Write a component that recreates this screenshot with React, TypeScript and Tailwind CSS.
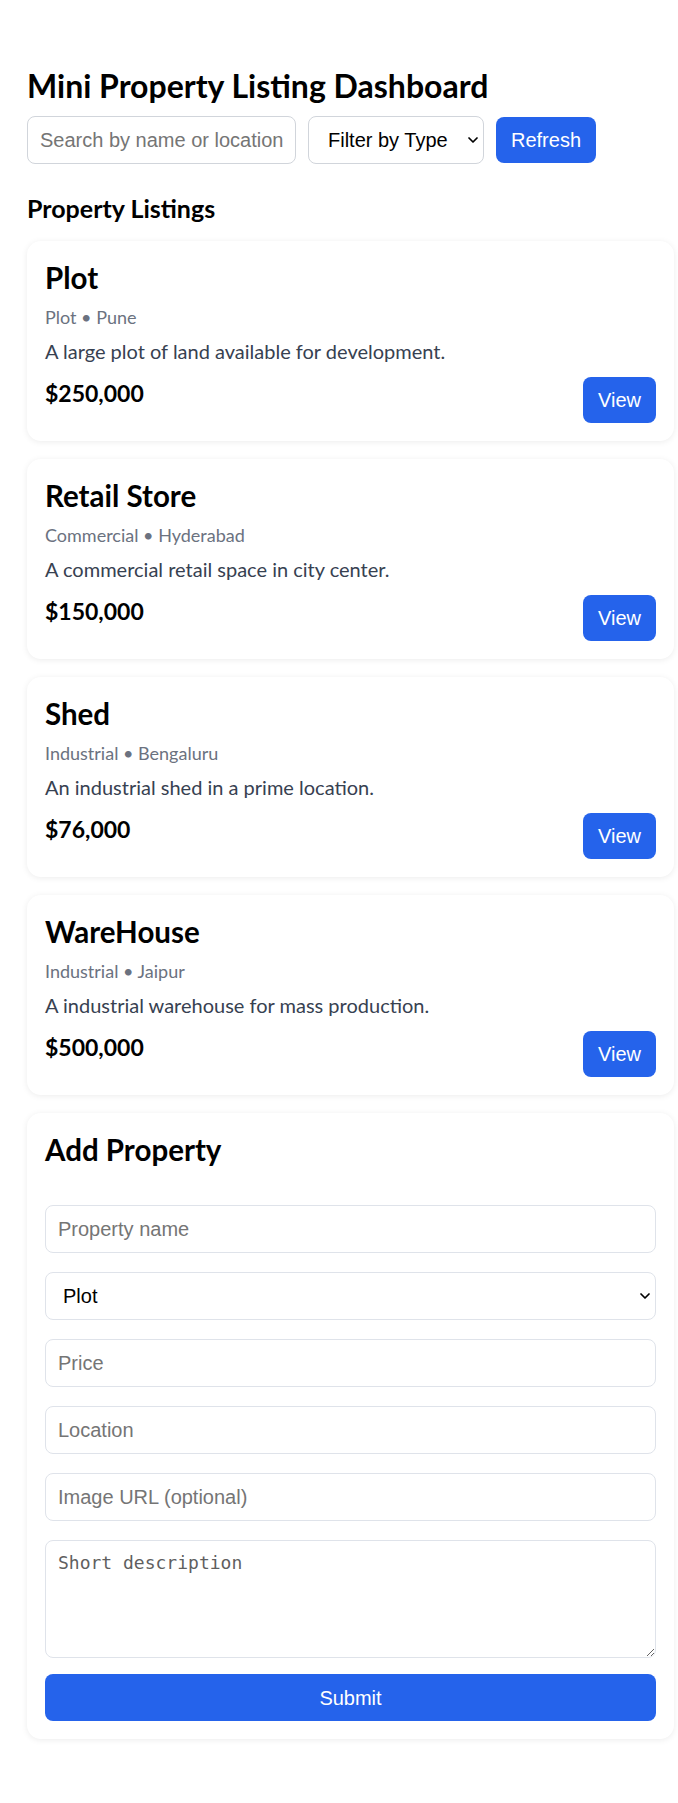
import React from 'react';
import { ChevronDown } from 'lucide-react';

const listings = [
  { title: 'Plot', type: 'Plot', city: 'Pune', desc: 'A large plot of land available for development.', price: '$250,000' },
  { title: 'Retail Store', type: 'Commercial', city: 'Hyderabad', desc: 'A commercial retail space in city center.', price: '$150,000' },
  { title: 'Shed', type: 'Industrial', city: 'Bengaluru', desc: 'An industrial shed in a prime location.', price: '$76,000' },
  { title: 'WareHouse', type: 'Industrial', city: 'Jaipur', desc: 'A industrial warehouse for mass production.', price: '$500,000' },
];

const field =
  "w-full h-[48px] px-[12px] rounded-lg border border-[#dfe3ea] bg-white text-[20px] text-black font-['Liberation_Sans',Arial,sans-serif] placeholder:text-[#757575] outline-none";

const App: React.FC = () => {
  return (
    <div className="min-h-[1803px] bg-white pl-[27px] pr-[4px] pt-[68px] font-['Lato',sans-serif] text-black">
      {/* Header */}
      <h1 className="text-[32px] leading-[36px] font-bold">Mini Property Listing Dashboard</h1>

      <div className="mt-[12px] flex items-center gap-[12px]">
        <input
          placeholder="Search by name or location"
          className="w-[269px] h-[48px] px-[12px] rounded-lg border border-[#d1d5db] text-[20px] font-['Liberation_Sans',Arial,sans-serif] placeholder:text-[#757575] outline-none"
        />
        <div className="relative">
          <select className="appearance-none w-[176px] h-[48px] pl-[19px] pr-[30px] rounded-lg border border-[#d1d5db] bg-white text-[20px] text-black font-['Liberation_Sans',Arial,sans-serif]">
            <option>Filter by Type</option>
            <option>Plot</option>
            <option>Commercial</option>
            <option>Industrial</option>
          </select>
          <ChevronDown size={16} strokeWidth={2.6} className="pointer-events-none absolute right-[3px] top-[16px] text-black" />
        </div>
        <button className="w-[100px] h-[46px] rounded-lg bg-[#2563eb] text-white text-[20px] font-['Liberation_Sans',Arial,sans-serif]">
          Refresh
        </button>
      </div>

      <h2 className="mt-[30px] text-[25px] leading-[28px] font-bold">Property Listings</h2>

      {/* Listings */}
      <div className="mt-[19px] flex flex-col gap-[18px]">
        {listings.map((item) => (
          <div key={item.title} className="rounded-[14px] bg-white px-[18px] pt-[20px] pb-[18px] shadow-[0_1px_6px_rgba(0,0,0,0.08)]">
            <h3 className="text-[29.5px] leading-[34px] font-bold">{item.title}</h3>
            <div className="mt-[10px] text-[18px] leading-[24px] text-[#6b7280]">
              {item.type} • {item.city}
            </div>
            <p className="mt-[8px] text-[20px] leading-[28px] text-[#374151]">{item.desc}</p>
            <div className="mt-[12px] flex items-start justify-between">
              <div className="text-[23px] leading-[32px] font-bold">{item.price}</div>
              <button className="w-[73px] h-[46px] rounded-lg bg-[#2563eb] text-white text-[20px] font-['Liberation_Sans',Arial,sans-serif]">
                View
              </button>
            </div>
          </div>
        ))}

        {/* Add form */}
        <div className="rounded-[14px] bg-white px-[18px] pt-[20px] pb-[18px] shadow-[0_1px_6px_rgba(0,0,0,0.08)]">
          <h3 className="text-[29.5px] leading-[34px] font-bold">Add Property</h3>
          <form className="mt-[38px] flex flex-col gap-[19px]">
            <input placeholder="Property name" className={field} />
            <div className="relative">
              <select className={field + ' appearance-none pl-[17px]'}>
                <option>Plot</option>
                <option>Commercial</option>
                <option>Industrial</option>
              </select>
              <ChevronDown size={16} strokeWidth={2.6} className="pointer-events-none absolute right-[3px] top-[16px] text-black" />
            </div>
            <input placeholder="Price" className={field} />
            <input placeholder="Location" className={field} />
            <input placeholder="Image URL (optional)" className={field} />
            <textarea
              placeholder="Short description"
              className="w-full h-[118px] px-[12px] py-[10px] rounded-lg border border-[#dfe3ea] text-[18px] leading-[24px] font-['DejaVu_Sans_Mono',monospace] placeholder:text-[#5f5f5f] outline-none"
            />
            <button type="button" className="-mt-[3px] w-full h-[47px] rounded-lg bg-[#2563eb] text-white text-[20px] font-['Liberation_Sans',Arial,sans-serif]">
              Submit
            </button>
          </form>
        </div>
      </div>
    </div>
  );
};

export default App;
